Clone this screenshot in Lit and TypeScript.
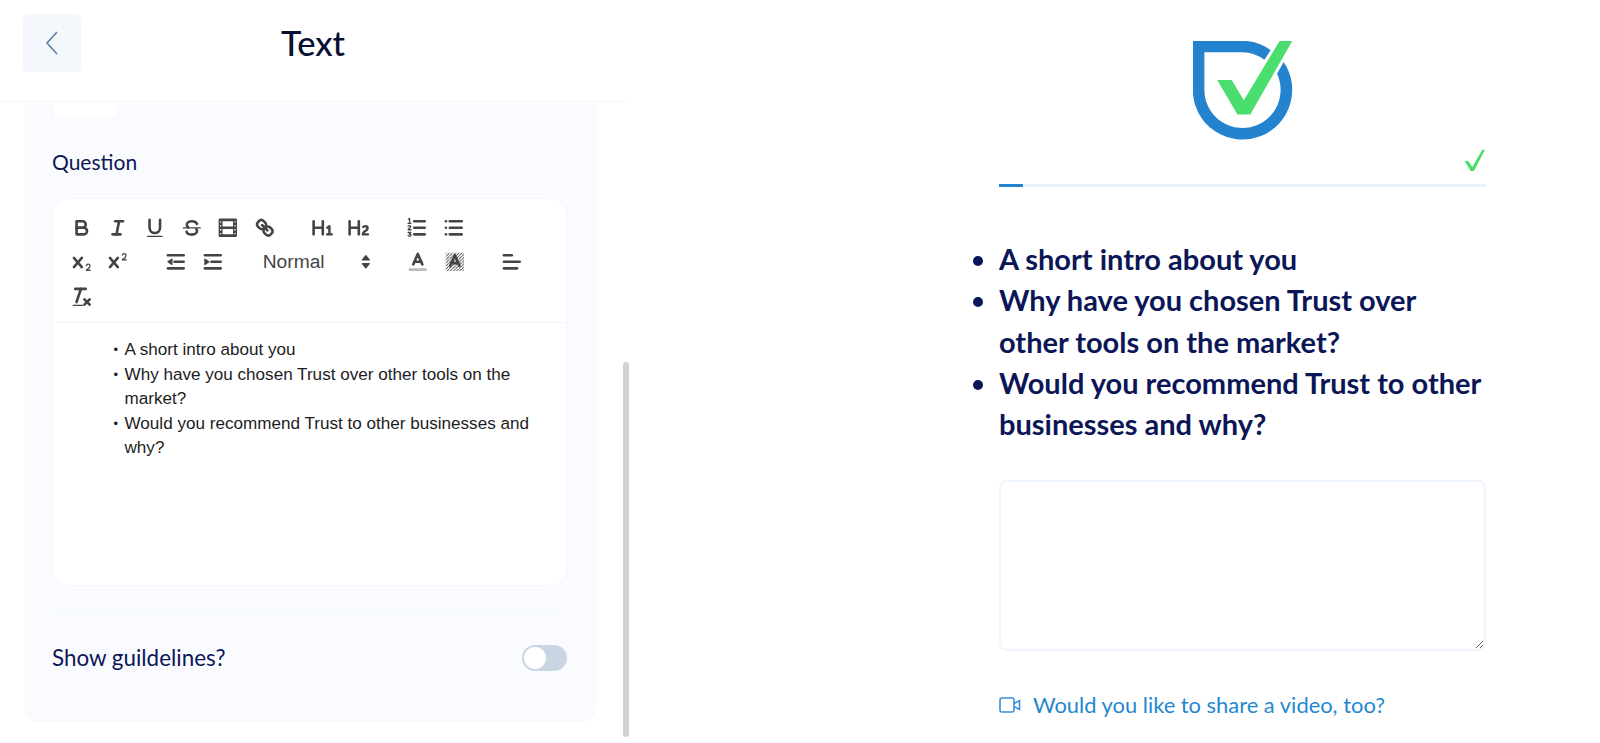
import { LitElement, html, css, svg } from 'lit';
import { customElement } from 'lit/decorators.js';

const icon = (body: unknown) => html`<svg class="ql" viewBox="0 0 18 18">${body}</svg>`;

const X = svg`<path class="f" d="M9.65,5.241a1,1,0,0,0-1.409.108L6,7.964,3.759,5.349A1,1,0,0,0,2.241,6.651L4.684,9.5,2.241,12.35a1,1,0,0,0,1.518,1.3L6,11.036,8.241,13.65a1,1,0,1,0,1.518-1.3L7.316,9.5,9.759,6.651A1,1,0,0,0,9.65,5.241Z"/>`;

const icons = {
  bold: svg`<path class="s" d="M5,4H9.5A2.5,2.5,0,0,1,12,6.5v0A2.5,2.5,0,0,1,9.5,9H5V4Z"/><path class="s" d="M5,9h5.5A2.5,2.5,0,0,1,13,11.5v0A2.5,2.5,0,0,1,10.5,14H5V9Z"/>`,
  italic: svg`<line class="s" x1="7" x2="13" y1="4" y2="4"/><line class="s" x1="5" x2="11" y1="14" y2="14"/><line class="s" x1="8" x2="10" y1="14" y2="4"/>`,
  underline: svg`<path class="s" d="M5,3V9a4,4,0,0,0,4,4H9a4,4,0,0,0,4-4V3"/><rect class="f" x="3" y="15" width="12" height="1" rx=".5"/>`,
  strike: svg`<line class="t" x1="2.5" x2="15.5" y1="9" y2="9"/><path class="s" d="M13,6C12.4,4.6,10.8,4,9,4S5.2,4.9,5.2,6.7c0,.8.4,1.5,1.1,1.9"/><path class="s" d="M5,12c.4,1.5,2,2.2,4,2.2s4-.9,4-2.7c0-.5-.2-1-.5-1.4"/>`,
  video: svg`<path class="f" fill-rule="evenodd" d="M15,2H3A1,1,0,0,0,2,3V15a1,1,0,0,0,1,1H15a1,1,0,0,0,1-1V3A1,1,0,0,0,15,2ZM4,14H3V13H4Zm0-3H3V10H4ZM4,8H3V7H4ZM4,5H3V4H4Zm9,9H5V10h8Zm0-6H5V4h8ZM15,14H14V13h1Zm0-3H14V10h1Zm0-3H14V7h1Zm0-3H14V4h1Z"/>`,
  link: svg`<line class="s" x1="7" x2="11" y1="7" y2="11"/><path class="s" d="M8.9,4.577a3.476,3.476,0,0,1,.36,4.679A3.476,3.476,0,0,1,4.577,8.9C3.185,7.5,2.035,6.4,4.217,4.217S7.5,3.185,8.9,4.577Z"/><path class="s" d="M13.423,9.1a3.476,3.476,0,0,0-4.679-.36,3.476,3.476,0,0,0,.36,4.679c1.392,1.392,2.5,2.542,4.679.36S14.815,10.5,13.423,9.1Z"/>`,
  h1: svg`<path class="f" d="M10,4V14a1,1,0,0,1-2,0V10H3v4a1,1,0,0,1-2,0V4A1,1,0,0,1,3,4V8H8V4a1,1,0,0,1,2,0Zm6.06787,9.209H14.98975V7.59863a.54085.54085,0,0,0-.605-.60547h-.62744a1.01119,1.01119,0,0,0-.748.29688L11.645,8.56641a.5435.5435,0,0,0-.022.8584l.28613.30762a.53861.53861,0,0,0,.84717.0332l.09912-.08789a1.2137,1.2137,0,0,0,.2417-.35254h.02246s-.01123.30859-.01123.60547V13.209H12.041a.54085.54085,0,0,0-.605.60547v.43945a.54085.54085,0,0,0,.605.60547h4.02686a.54085.54085,0,0,0,.605-.60547v-.43945A.54085.54085,0,0,0,16.06787,13.209Z"/>`,
  h2: svg`<path class="f" d="M16.73975,13.81445v.43945a.54085.54085,0,0,1-.605.60547H11.855a.58392.58392,0,0,1-.64893-.60547V14.0127c0-2.90527,3.39941-3.42187,3.39941-4.55469a.77675.77675,0,0,0-.84717-.78125,1.17684,1.17684,0,0,0-.83594.38477c-.2749.26367-.561.374-.85791.13184l-.4292-.34082c-.30811-.24219-.38525-.51758-.1543-.81445a2.97155,2.97155,0,0,1,2.45361-1.17676,2.45393,2.45393,0,0,1,2.68408,2.40918c0,2.45312-3.1792,2.92676-3.27832,3.93848h2.79443A.54085.54085,0,0,1,16.73975,13.81445ZM9,3A.99974.99974,0,0,0,8,4V8H3V4A1,1,0,0,0,1,4V14a1,1,0,0,0,2,0V10H8v4a1,1,0,0,0,2,0V4A.99974.99974,0,0,0,9,3Z"/>`,
  ol: svg`<line class="s" x1="7" x2="15" y1="4" y2="4"/><line class="s" x1="7" x2="15" y1="9" y2="9"/><line class="s" x1="7" x2="15" y1="14" y2="14"/><path class="t" d="M2.6,2.4l.9-.5V5.6M2.3,5.6H4.6M2.4,7.8c.4-.7,2-.6,2,.3,0,.8-2,1.7-2,2.4H4.6M2.4,12.6H4.4L3.3,13.9c1,-.1,1.4.4,1.3.9-.1.7-1.7.9-2.3.2"/>`,
  ul: svg`<line class="s" x1="6" x2="15" y1="4" y2="4"/><line class="s" x1="6" x2="15" y1="9" y2="9"/><line class="s" x1="6" x2="15" y1="14" y2="14"/><line class="s" x1="3" x2="3" y1="4" y2="4"/><line class="s" x1="3" x2="3" y1="9" y2="9"/><line class="s" x1="3" x2="3" y1="14" y2="14"/>`,
  sub: svg`<path class="f" d="M15.5,15H13.861a3.858,3.858,0,0,0,1.914-2.975,1.8,1.8,0,0,0-1.6-1.751A1.921,1.921,0,0,0,12.021,11.7a.50013.50013,0,1,0,.957.291h0a.914.914,0,0,1,1.053-.725.81.81,0,0,1,.744.762c0,1.076-1.16971,1.86982-1.93971,2.43082A1.45639,1.45639,0,0,0,12,15.5a.5.5,0,0,0,.5.5h3A.5.5,0,0,0,15.5,15Z"/>${X}`,
  sup: svg`<path class="f" d="M15.5,7H13.861a4.015,4.015,0,0,0,1.914-2.975,1.8,1.8,0,0,0-1.6-1.751A1.922,1.922,0,0,0,12.021,3.7a.5.5,0,1,0,.957.291.917.917,0,0,1,1.053-.725.81.81,0,0,1,.744.762c0,1.077-1.164,1.925-1.934,2.486A1.423,1.423,0,0,0,12,7.5a.5.5,0,0,0,.5.5h3A.5.5,0,0,0,15.5,7Z"/>${X}`,
  outdent: svg`<line class="s" x1="3" x2="15" y1="14" y2="14"/><line class="s" x1="3" x2="15" y1="4" y2="4"/><line class="s" x1="8" x2="15" y1="9" y2="9"/><polygon class="f r" points="6 7 6 11 3 9 6 7"/>`,
  indent: svg`<line class="s" x1="3" x2="15" y1="14" y2="14"/><line class="s" x1="3" x2="15" y1="4" y2="4"/><line class="s" x1="8" x2="15" y1="9" y2="9"/><polygon class="f r" points="3 7 3 11 6 9 3 7"/>`,
  color: svg`<line class="s faint" x1="3" x2="15" y1="15" y2="15"/><polyline class="s" points="5.5 11 9 3 12.5 11"/><line class="s" x1="11.63" x2="6.38" y1="9" y2="9"/>`,
  background: svg`<defs><pattern id="hatch" width="2.4" height="2.4" patternUnits="userSpaceOnUse"><path d="M0,2.4L2.4,0" stroke="#444" stroke-width=".7"/></pattern></defs><rect x="2" y="2" width="14" height="14" fill="url(#hatch)"/><polyline class="s" points="5.5 12 9 4 12.5 12"/><line class="s" x1="11.63" x2="6.38" y1="10" y2="10"/>`,
  align: svg`<line class="s" x1="3" x2="15" y1="9" y2="9"/><line class="s" x1="3" x2="13" y1="14" y2="14"/><line class="s" x1="3" x2="9" y1="4" y2="4"/>`,
  clean: svg`<line class="s" x1="4" x2="12" y1="3" y2="3"/><line class="s" x1="5" x2="8.35" y1="13" y2="3"/><line class="s" x1="11" x2="15" y1="11" y2="15"/><line class="s" x1="15" x2="11" y1="11" y2="15"/><rect class="f" x="2" y="15" width="8" height="1" rx=".5"/>`,
  arrows: svg`<polygon class="f r" points="11 7.6 13.6 4.4 16.2 7.6"/><polygon class="f r" points="11 10.4 13.6 13.6 16.2 10.4"/>`,
};

const groups: (keyof typeof icons)[][] = [
  ['bold', 'italic', 'underline', 'strike', 'video', 'link'],
  ['h1', 'h2'],
  ['ol', 'ul'],
  ['sub', 'sup'],
  ['outdent', 'indent'],
];

@customElement('app-root')
export class AppRoot extends LitElement {
  static styles = css`
    :host {
      display: grid;
      grid-template-columns: 630px 1fr;
      height: 743px;
      overflow: hidden;
      background: #fff;
      font-family: 'Lato', 'Noto Sans', sans-serif;
      color: #0b1657;
    }
    .left {
      position: relative;
      height: 743px;
      overflow: hidden;
    }
    .header {
      display: grid;
      grid-template-columns: 58px 1fr 58px;
      align-items: center;
      height: 102px;
      padding: 0 25px 0 23px;
      box-sizing: border-box;
      border-bottom: 1px solid #f3f6fc;
      margin-right: 2px;
    }
    .back {
      display: flex;
      align-items: center;
      justify-content: center;
      width: 58px;
      height: 58px;
      margin-top: -15px;
      border-radius: 5px;
      background: #f4f7fc;
    }
    .back svg {
      width: 14px;
      height: 26px;
      fill: none;
      stroke: #5d7fa6;
      stroke-width: 1.6;
    }
    .title {
      margin: -17px 0 0;
      text-align: center;
      font-family: inherit;
      font-size: 34.5px;
      font-weight: 500;
      color: #081033;
    }
    .panel {
      width: 572px;
      height: 620px;
      margin-left: 24px;
      padding: 0 28px 0 27px;
      box-sizing: border-box;
      background: #fafbfe;
      border: 1px solid #f4f7fd;
      border-top: 0;
      border-radius: 0 0 16px 16px;
    }
    .stub {
      width: 66px;
      height: 16px;
      background: #fff;
      border: 1px solid #f4f7fd;
      border-top: 0;
      border-radius: 0 0 4px 4px;
      box-sizing: border-box;
    }
    .label {
      margin: 30px 0 22px;
      font-size: 21px;
      line-height: 28px;
    }
    .editor {
      height: 388px;
      background: #fff;
      border: 1px solid #f1f5fc;
      border-radius: 16px;
      box-sizing: border-box;
      overflow: hidden;
    }
    .toolbar {
      display: flex;
      flex-wrap: wrap;
      row-gap: 3px;
      height: 124px;
      box-sizing: border-box;
      padding: 13px 0 0 10px;
      border-bottom: 1px solid #f1f5fc;
      align-content: flex-start;
    }
    .formats {
      display: flex;
      margin-right: 21px;
    }
    .btn {
      display: flex;
      align-items: center;
      justify-content: center;
      width: 36.7px;
      height: 31.5px;
    }
    .ql {
      width: 23.6px;
      height: 23.6px;
    }
    .ql .s,
    .ql .t {
      fill: none;
      stroke: #444;
      stroke-width: 2;
      stroke-linecap: round;
      stroke-linejoin: round;
    }
    .ql .t {
      stroke-width: 1;
    }
    .ql .f {
      fill: #444;
    }
    .ql .r {
      stroke: #444;
      stroke-width: 1;
      stroke-linejoin: round;
    }
    .ql .faint {
      stroke: #bbb;
    }
    .picker {
      display: flex;
      align-items: center;
      justify-content: space-between;
      width: 126.6px;
      height: 31.5px;
      padding-left: 11px;
      box-sizing: border-box;
      font-family: 'Liberation Sans', Arial, sans-serif;
      font-size: 19.2px;
      color: #444;
    }
    .content {
      margin: 0;
      padding: 15px 28px 0 71.5px;
      list-style: none;
      font-family: 'Liberation Sans', Arial, sans-serif;
      font-size: 17.1px;
      line-height: 24.5px;
      color: #1c1c22;
    }
    .content li {
      position: relative;
    }
    .content li::before {
      content: '•';
      position: absolute;
      left: -11px;
      font-size: 13px;
    }
    .divider {
      height: 1px;
      margin-top: 28px;
      background: #f2f6fd;
    }
    .row {
      display: flex;
      align-items: center;
      justify-content: space-between;
      margin-top: 29px;
      font-size: 22.4px;
    }
    .toggle {
      width: 45px;
      height: 26px;
      padding: 2px;
      box-sizing: border-box;
      border-radius: 13px;
      background: #c9d5e3;
    }
    .toggle span {
      display: block;
      width: 22px;
      height: 22px;
      border-radius: 50%;
      background: #fff;
    }
    .scrollbar {
      position: absolute;
      left: 623px;
      top: 362px;
      width: 6px;
      height: 375px;
      border-radius: 3px;
      background: #d2d2d2;
    }
    .right {
      width: 487px;
      margin-left: 369px;
      padding-top: 41px;
    }
    .logo {
      display: block;
      width: 100px;
      height: 100px;
      margin: 0 auto;
    }
    .done {
      display: block;
      width: 22px;
      height: 23px;
      margin: 8px 0 0 auto;
    }
    .progress {
      height: 3px;
      margin-top: 12px;
      background: #e9f3fd;
    }
    .progress div {
      height: 100%;
      background: #2383cf;
    }
    .points {
      margin: 51px 0 0;
      padding: 0;
      font-size: 29px;
      font-weight: 700;
      line-height: 41.3px;
      color: #0b1657;
    }
    textarea {
      display: block;
      width: 100%;
      height: 171px;
      margin-top: 36px;
      box-sizing: border-box;
      background: #fff;
      border: 2px solid #eef5fe;
      border-radius: 8px;
      outline: none;
    }
    .video {
      display: flex;
      align-items: center;
      gap: 12px;
      margin-top: 40px;
      font-size: 21.9px;
      line-height: 28px;
      color: #1f87d0;
    }
    .video svg {
      width: 22px;
      height: 16px;
      fill: none;
      stroke: #3b8fd6;
      stroke-width: 1.6;
    }
  `;

  render() {
    const pct = (24 / 487) * 100;
    return html`
      <section class="left">
        <header class="header">
          <div class="back">
            <svg viewBox="0 0 14 26"><path d="M12 2 2 13l10 11" /></svg>
          </div>
          <h1 class="title">Text</h1>
        </header>
        <div class="panel">
          <div class="stub"></div>
          <p class="label">Question</p>
          <div class="editor">
            <div class="toolbar">
              ${groups.map(
                (g) => html`<span class="formats">${g.map((n) => html`<span class="btn">${icon(icons[n])}</span>`)}</span>`
              )}
              <span class="formats">
                <span class="picker">Normal<span class="btn">${icon(icons.arrows)}</span></span>
              </span>
              <span class="formats">
                <span class="btn">${icon(icons.color)}</span>
                <span class="btn">${icon(icons.background)}</span>
              </span>
              <span class="formats"><span class="btn">${icon(icons.align)}</span></span>
              <span class="formats"><span class="btn">${icon(icons.clean)}</span></span>
            </div>
            <ul class="content">
              <li>A short intro about you</li>
              <li>Why have you chosen Trust over other tools on the market?</li>
              <li>Would you recommend Trust to other businesses and why?</li>
            </ul>
          </div>
          <div class="divider"></div>
          <div class="row">
            <span>Show guildelines?</span>
            <div class="toggle"><span></span></div>
          </div>
        </div>
        <div class="scrollbar"></div>
      </section>
      <section class="right">
        <svg class="logo" viewBox="0 0 99 99">
          <path
            d="M74 14A43.5 43.5 0 0 0 49.3 5.5H5.5V49.3A43.5 43.5 0 1 0 82 20"
            fill="none"
            stroke="#2383cf"
            stroke-width="11.5"
          />
          <polygon
            points="85.7,0 98.3,0 56.7,72.7 44,72.7 24,38.7 38.3,38.7 50.3,58.7"
            fill="#4ade6f"
            stroke="#fff"
            stroke-width="6"
            paint-order="stroke"
          />
        </svg>
        <svg class="done" viewBox="0 0 22 23">
          <polygon points="0.7,12 6.7,22 10,22 21,0.7 18.3,0.7 8.3,18 4.3,12" fill="#4ade6f" />
        </svg>
        <div class="progress"><div style="width:${pct}%"></div></div>
        <ul class="points">
          <li>A short intro about you</li>
          <li>Why have you chosen Trust over other tools on the market?</li>
          <li>Would you recommend Trust to other businesses and why?</li>
        </ul>
        <textarea></textarea>
        <div class="video">
          <svg viewBox="0 0 22 16">
            <rect x="1" y="1" width="14" height="14" rx="2" />
            <path d="M15 6.5 20.5 3.5v9L15 9.5" />
          </svg>
          <span>Would you like to share a video, too?</span>
        </div>
      </section>
    `;
  }
}
